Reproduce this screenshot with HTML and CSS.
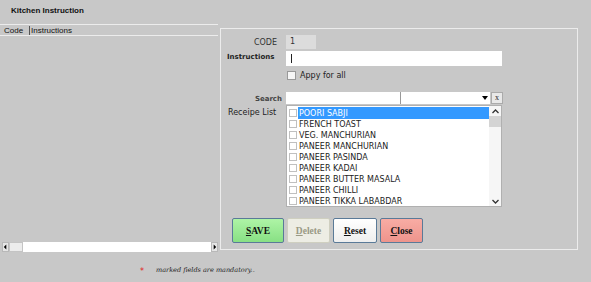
FILE: index.html
```html
<!DOCTYPE html>
<html lang="en">
<head>
  <meta charset="UTF-8">
  <meta name="viewport" content="width=device-width, initial-scale=1.0">
  <title>Kitchen Instruction</title>
  <link rel="stylesheet" href="styles.css">
</head>
<body>
  <div class="title">Kitchen Instruction</div>

  <div class="main">
    <!-- left: instruction grid -->
    <div class="grid-panel">
      <div class="grid-head">
        <span class="col-code">Code</span>
        <span class="col-ins">Instructions</span>
      </div>
      <div class="grid-body"></div>
      <div class="hscroll">
        <span class="hs-btn"><svg width="6" height="6" viewBox="0 0 6 6"><path d="M4 0 L1 3 L4 6 Z" fill="#000"/></svg></span>
        <span class="hs-thumb"></span>
        <span class="hs-track"></span>
        <span class="hs-btn"><svg width="6" height="6" viewBox="0 0 6 6"><path d="M2 0 L5 3 L2 6 Z" fill="#000"/></svg></span>
      </div>
    </div>

    <!-- right: entry form -->
    <form class="form-panel" id="instruction-form">
      <div class="row row-code">
        <label class="lbl lbl-code">CODE</label>
        <div class="code-box">1</div>
      </div>

      <div class="row row-ins">
        <label class="lbl lbl-ins" for="instructions">Instructions</label>
        <div class="text-box"><span class="caret"></span></div>
      </div>

      <div class="row row-check">
        <span class="lbl"></span>
        <span class="check"></span>
        <span class="check-text">Appy for all</span>
      </div>

      <div class="row row-search">
        <label class="lbl lbl-search">Search</label>
        <div class="search-box"></div>
        <div class="combo">
          <svg width="6" height="4" viewBox="0 0 6 4"><path d="M0 0 L6 0 L3 4 Z" fill="#000"/></svg>
        </div>
        <div class="clear-btn">x</div>
      </div>

      <div class="row row-list">
        <label class="lbl lbl-list">Receipe List</label>
        <div class="list">
          <div class="items">
            <div class="item selected"><span class="box"></span><span class="name">POORI SABJI</span></div>
            <div class="item"><span class="box"></span><span class="name">FRENCH TOAST</span></div>
            <div class="item"><span class="box"></span><span class="name">VEG. MANCHURIAN</span></div>
            <div class="item"><span class="box"></span><span class="name">PANEER MANCHURIAN</span></div>
            <div class="item"><span class="box"></span><span class="name">PANEER PASINDA</span></div>
            <div class="item"><span class="box"></span><span class="name">PANEER KADAI</span></div>
            <div class="item"><span class="box"></span><span class="name">PANEER BUTTER MASALA</span></div>
            <div class="item"><span class="box"></span><span class="name">PANEER CHILLI</span></div>
            <div class="item"><span class="box"></span><span class="name">PANEER TIKKA LABABDAR</span></div>
          </div>
          <div class="vscroll">
            <span class="vs-btn"><svg width="7" height="5" viewBox="0 0 7 5"><path d="M0.5 4 L3.5 1 L6.5 4" fill="none" stroke="#333" stroke-width="1.3"/></svg></span>
            <span class="vs-thumb"></span>
            <span class="vs-track"></span>
            <span class="vs-btn"><svg width="7" height="5" viewBox="0 0 7 5"><path d="M0.5 1 L3.5 4 L6.5 1" fill="none" stroke="#333" stroke-width="1.3"/></svg></span>
          </div>
        </div>
      </div>

      <div class="buttons">
        <button type="button" class="btn btn-save"><u>S</u>AVE</button>
        <button type="button" class="btn btn-delete" disabled><u>D</u>elete</button>
        <button type="button" class="btn btn-reset"><u>R</u>eset</button>
        <button type="button" class="btn btn-close"><u>C</u>lose</button>
      </div>
    </form>
  </div>

  <div class="footer">
    <span class="star">*</span>
    <span class="note">marked fields are mandatory..</span>
  </div>
</body>
</html>
```

FILE: styles.css
```css
body {
  margin: 0;
  width: 591px;
  height: 282px;
  background: #c8c8c8;
  font-family: "DejaVu Sans", sans-serif;
  font-size: 8px;
  color: #222;
  overflow: hidden;
}

.title {
  height: 24px;
  line-height: 21px;
  padding-left: 11px;
  font-family: "Liberation Sans", Arial, sans-serif;
  font-size: 8px;
  font-weight: bold;
  color: #111;
}

.main {
  display: flex;
  align-items: flex-start;
  height: 228px;
}

/* left grid */
.grid-panel {
  width: 219px;
  height: 228px;
  display: flex;
  flex-direction: column;
}

.grid-head {
  display: flex;
  align-items: center;
  height: 10px;
  width: 218px;
  border-top: 1px solid #ececec;
  border-bottom: 1px solid #ececec;
  font-family: "Liberation Sans", Arial, sans-serif;
  font-size: 8px;
  color: #111;
}

.col-code {
  width: 25px;
  padding-left: 4px;
  border-right: 1px solid #555;
  line-height: 9px;
}

.col-ins {
  padding-left: 1px;
}

.grid-body {
  flex: 1;
}

.hscroll {
  display: flex;
  height: 10px;
  width: 216px;
  margin-left: 2px;
  background: #fff;
}

.hs-btn {
  width: 7px;
  display: flex;
  align-items: center;
  justify-content: center;
  background: #e6e6e6;
  border: 1px solid #b8b8b8;
  box-sizing: border-box;
}

.hs-thumb {
  width: 14px;
  background: #ececec;
  border: 1px solid #c4c4c4;
  box-sizing: border-box;
}

.hs-track {
  flex: 1;
  background: #fff;
}

/* right form */
.form-panel {
  margin: 4px 0 0 1px;
  width: 358px;
  height: 222px;
  box-sizing: border-box;
  border: 1px solid #ececec;
  padding-top: 6px;
}

.row {
  display: flex;
}

.lbl {
  width: 65px;
  flex: none;
  box-sizing: border-box;
}

.row-code {
  height: 14px;
  align-items: center;
}

.lbl-code {
  text-align: right;
  padding-right: 9px;
  color: #333;
}

.code-box {
  width: 30px;
  height: 14px;
  line-height: 14px;
  background: #dcdcdc;
  padding-left: 4px;
  box-sizing: border-box;
  color: #333;
}

.row-ins {
  margin-top: 2px;
  height: 15px;
}

.lbl-ins {
  padding-left: 6px;
  font-size: 7px;
  font-weight: bold;
  line-height: 12px;
}

.text-box {
  width: 216px;
  height: 15px;
  background: #fff;
  display: flex;
  align-items: center;
  padding-left: 5px;
  box-sizing: border-box;
}

.caret {
  width: 1px;
  height: 9px;
  background: #222;
}

.row-check {
  margin-top: 5px;
  height: 9px;
  align-items: center;
}

.check {
  width: 7px;
  height: 7px;
  margin-left: 1px;
  background: #f6f6f6;
  border: 1px solid #999;
}

.check-text {
  margin-left: 4px;
  font-size: 8px;
}

.row-search {
  margin-top: 12px;
  height: 12px;
}

.lbl-search {
  text-align: right;
  padding-right: 4px;
  font-size: 7px;
  font-weight: bold;
  color: #444;
  line-height: 15px;
}

.search-box {
  width: 114px;
  background: #fff;
  border-right: 1px solid #999;
}

.combo {
  width: 89px;
  background: #fff;
  display: flex;
  align-items: center;
  justify-content: flex-end;
  padding-right: 2px;
  box-sizing: border-box;
}

.clear-btn {
  width: 12px;
  margin-left: 1px;
  background: #e8e8e8;
  border: 1px solid #aaa;
  box-sizing: border-box;
  font-family: "Liberation Serif", serif;
  font-size: 8px;
  line-height: 9px;
  text-align: center;
}

.row-list {
  margin-top: 1px;
}

.lbl-list {
  padding-left: 7px;
  line-height: 15px;
}

.list {
  width: 216px;
  height: 102px;
  display: flex;
  background: #fff;
  border: 1px solid #b0b0b0;
  box-sizing: border-box;
}

.items {
  flex: 1;
  padding-top: 1px;
}

.item {
  display: flex;
  align-items: center;
  height: 11.1px;
}

.box {
  width: 6px;
  height: 6px;
  margin: 0 1px 0 2px;
  border: 1px solid #c0c0c0;
  flex: none;
}

.name {
  flex: 1;
  line-height: 11px;
  padding-left: 1px;
  padding-top: 1px;
}

.item.selected .name {
  background: #3399ff;
  color: #fff;
}

.vscroll {
  width: 12px;
  display: flex;
  flex-direction: column;
  background: #f6f6f6;
}

.vs-btn {
  height: 10px;
  display: flex;
  align-items: center;
  justify-content: center;
}

.vs-thumb {
  height: 11px;
  background: #d4d4d4;
}

.vs-track {
  flex: 1;
}

.buttons {
  display: flex;
  gap: 3px;
  margin: 11px 0 0 11px;
}

.btn {
  height: 25px;
  border: 1px solid #5a7a98;
  border-radius: 2px;
  font-family: "Liberation Serif", serif;
  font-size: 9.5px;
  font-weight: bold;
  color: #111;
  padding: 0;
  cursor: pointer;
}

.btn-save {
  width: 52px;
  background: linear-gradient(#aef4a6, #88e084);
}

.btn-delete {
  width: 43px;
  background: #ededE4;
  border-color: #cfcfc0;
  color: #9a9a84;
}

.btn-reset {
  width: 44px;
  background: linear-gradient(#ffffff, #eeeeee);
}

.btn-close {
  width: 43px;
  background: linear-gradient(#f8aca4, #ee948c);
}

.footer {
  margin-top: 12px;
  padding-left: 140px;
  display: flex;
  align-items: center;
  height: 12px;
}

.star {
  color: #e02020;
  font-size: 8px;
  width: 16px;
  padding-top: 3px;
}

.note {
  font-family: "DejaVu Serif", serif;
  font-style: italic;
  font-size: 6.5px;
  color: #222;
}
```
